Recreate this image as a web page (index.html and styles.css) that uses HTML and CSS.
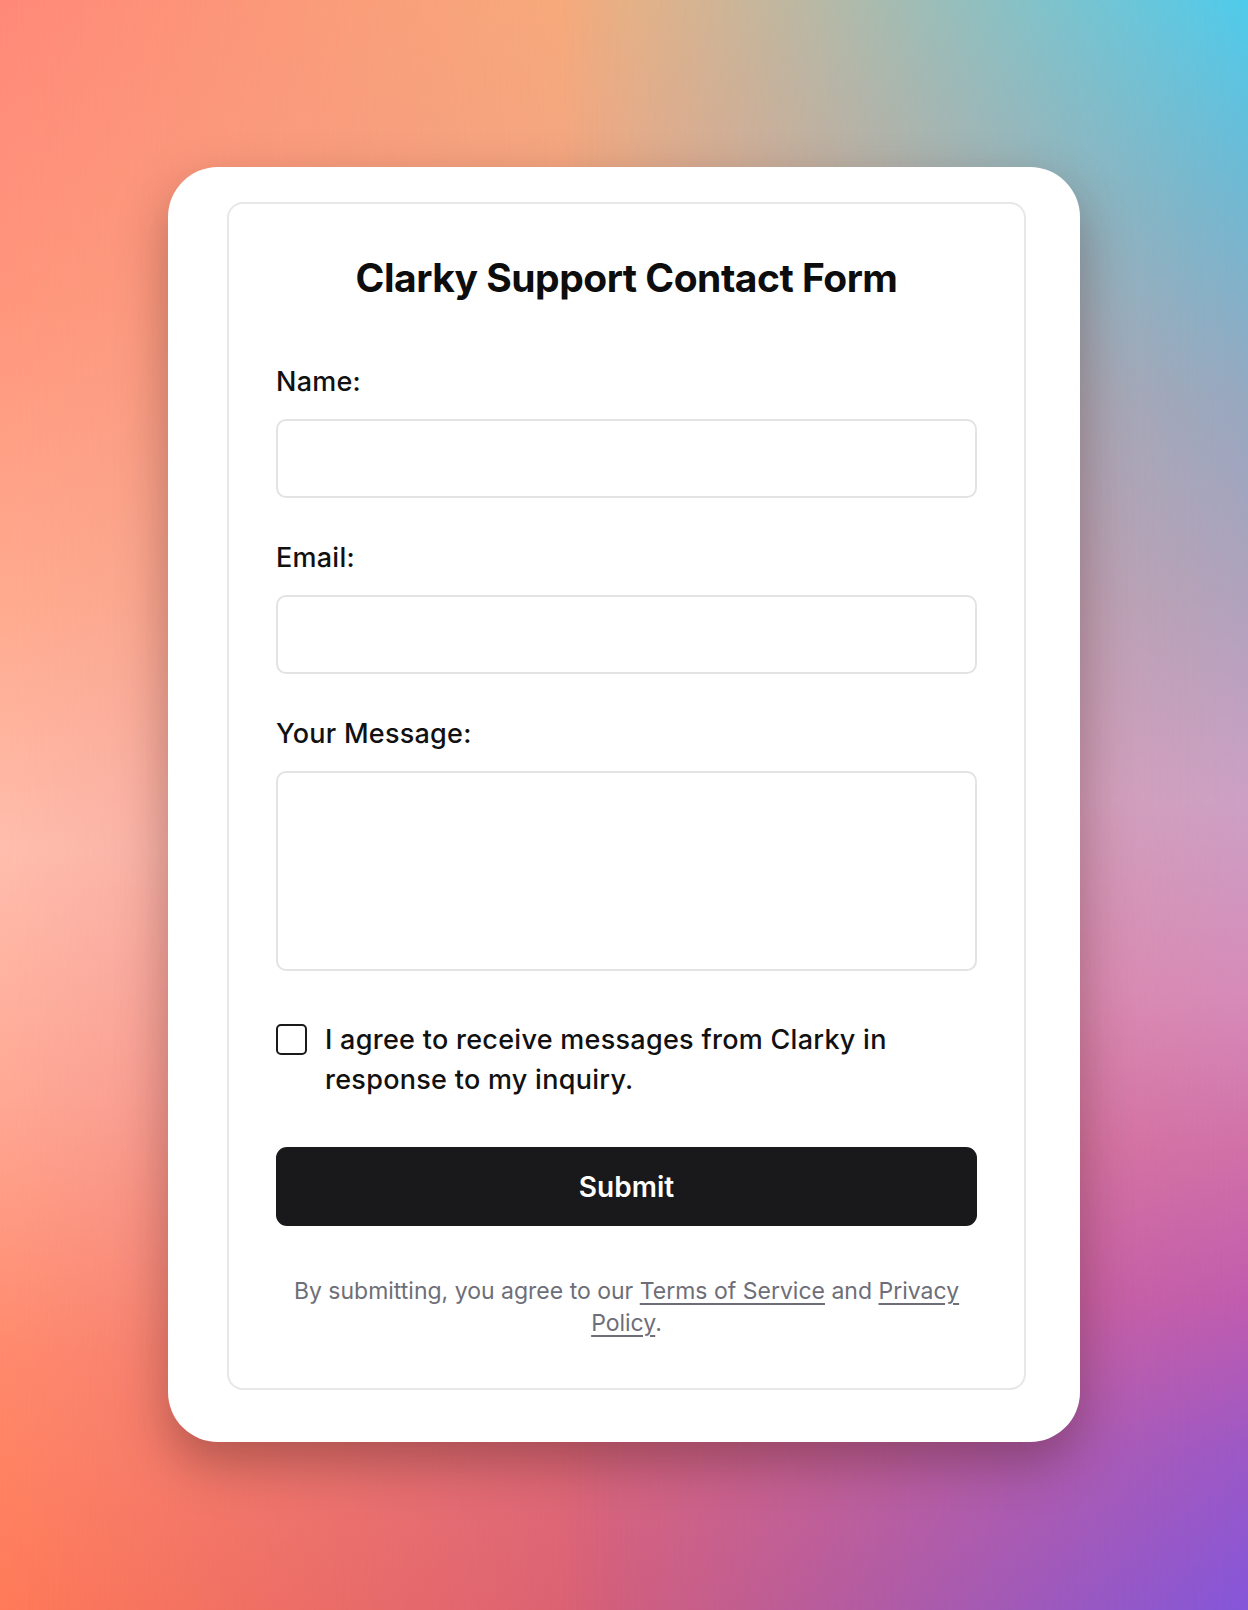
FILE: index.html
```html
<!DOCTYPE html>
<html lang="en">
<head>
<meta charset="utf-8">
<title>Clarky Support Contact Form</title>
<link rel="stylesheet" href="styles.css">
</head>
<body>
<main class="page">
  <div class="frame">
    <form class="card">
      <h1 class="title">Clarky Support Contact Form</h1>
      <div class="field">
        <label class="label" for="name">Name:</label>
        <input class="input" id="name" type="text">
      </div>
      <div class="field">
        <label class="label" for="email">Email:</label>
        <input class="input" id="email" type="email">
      </div>
      <div class="field field-last">
        <label class="label" for="msg">Your Message:</label>
        <textarea class="textarea" id="msg"></textarea>
      </div>
      <label class="consent">
        <span class="box"></span>
        <span class="consent-text">I agree to receive messages from Clarky in response to my inquiry.</span>
      </label>
      <button class="submit" type="button">Submit</button>
      <p class="legal">By submitting, you agree to our <a href="#">Terms of Service</a> and <a href="#">Privacy Policy</a>.</p>
    </form>
  </div>
</main>
</body>
</html>
```

FILE: styles.css
```css
* { box-sizing: border-box; }
html, body { margin: 0; padding: 0; }
body {
  position: relative;
  width: 1248px;
  height: 1610px;
  overflow: hidden;
  font-family: Inter, "Liberation Sans", sans-serif;
  background: linear-gradient(180deg,
    #f6ae7c 0px, #f2a882 200px, #eca292 500px, #e89a9c 800px,
    #e4808e 1100px, #de6c80 1350px, #d86076 1610px);
}
body::before,
body::after {
  content: "";
  position: absolute;
  inset: 0;
  z-index: 0;
}
body::before {
  background: linear-gradient(180deg,
    #ff8878 0px, #ff967c 300px, #ffaa8e 600px, #ffbdac 850px,
    #ffa894 1100px, #ff8a6c 1350px, #ff7a58 1610px);
  -webkit-mask-image: linear-gradient(90deg, #000 0%, rgba(0,0,0,0.6) 20%, transparent 50%);
  mask-image: linear-gradient(90deg, #000 0%, rgba(0,0,0,0.6) 20%, transparent 50%);
}
body::after {
  background: linear-gradient(180deg,
    #4ecbec 0px, #70b8d2 200px, #96a8c0 400px, #b0a2bc 600px,
    #cca0c4 800px, #d68ab8 1000px, #d070a8 1150px, #c05cae 1300px,
    #9c58c6 1450px, #8456da 1610px);
  -webkit-mask-image: linear-gradient(90deg, transparent 45%, rgba(0,0,0,0.6) 78%, #000 100%);
  mask-image: linear-gradient(90deg, transparent 45%, rgba(0,0,0,0.6) 78%, #000 100%);
}
.page {
  position: relative;
  z-index: 1;
  display: flex;
  justify-content: center;
  padding-top: 167px;
}
.frame {
  width: 912px;
  background: #fff;
  border-radius: 50px;
  padding: 35px 54px 52px 59px;
  box-shadow: 0 22px 50px rgba(60, 20, 20, 0.35);
}
.card {
  display: flex;
  flex-direction: column;
  border: 2px solid #e7e7e7;
  border-radius: 16px;
  padding: 51px 47px 49px;
}
.title {
  margin: 0 0 65px;
  font-size: 39px;
  line-height: 46px;
  font-weight: 700;
  letter-spacing: -0.5px;
  color: #0d0d0d;
  text-align: center;
}
.field {
  display: flex;
  flex-direction: column;
  margin-bottom: 44px;
}
.field-last { margin-bottom: 49px; }
.label {
  font-size: 27px;
  line-height: 32px;
  font-weight: 500;
  letter-spacing: 0.25px;
  color: #111;
  margin-bottom: 21px;
}
.input, .textarea {
  display: block;
  width: 100%;
  height: 79px;
  border: 2px solid #e3e3e3;
  border-radius: 10px;
  background: #fff;
  font: inherit;
  padding: 0 20px;
  outline: none;
}
.textarea {
  height: 200px;
  resize: none;
  padding: 16px 20px;
}
.consent {
  display: flex;
  align-items: flex-start;
  gap: 18px;
}
.box {
  flex: none;
  width: 31px;
  height: 31px;
  margin-top: 4px;
  border: 2px solid #1a1a1a;
  border-radius: 5px;
}
.consent-text {
  font-size: 27px;
  line-height: 40px;
  font-weight: 500;
  letter-spacing: 0.28px;
  color: #111;
}
.submit {
  margin-top: 47px;
  height: 79px;
  border: none;
  border-radius: 11px;
  background: #19191b;
  color: #fff;
  font-family: inherit;
  font-size: 28px;
  font-weight: 600;
}
.legal {
  margin: 49px 0 0;
  font-size: 23px;
  line-height: 32px;
  color: #6e6e78;
  text-align: center;
  padding: 0 4px;
}
.legal a {
  color: #6e6e78;
  text-decoration: underline;
  text-underline-offset: 4px;
}
```
